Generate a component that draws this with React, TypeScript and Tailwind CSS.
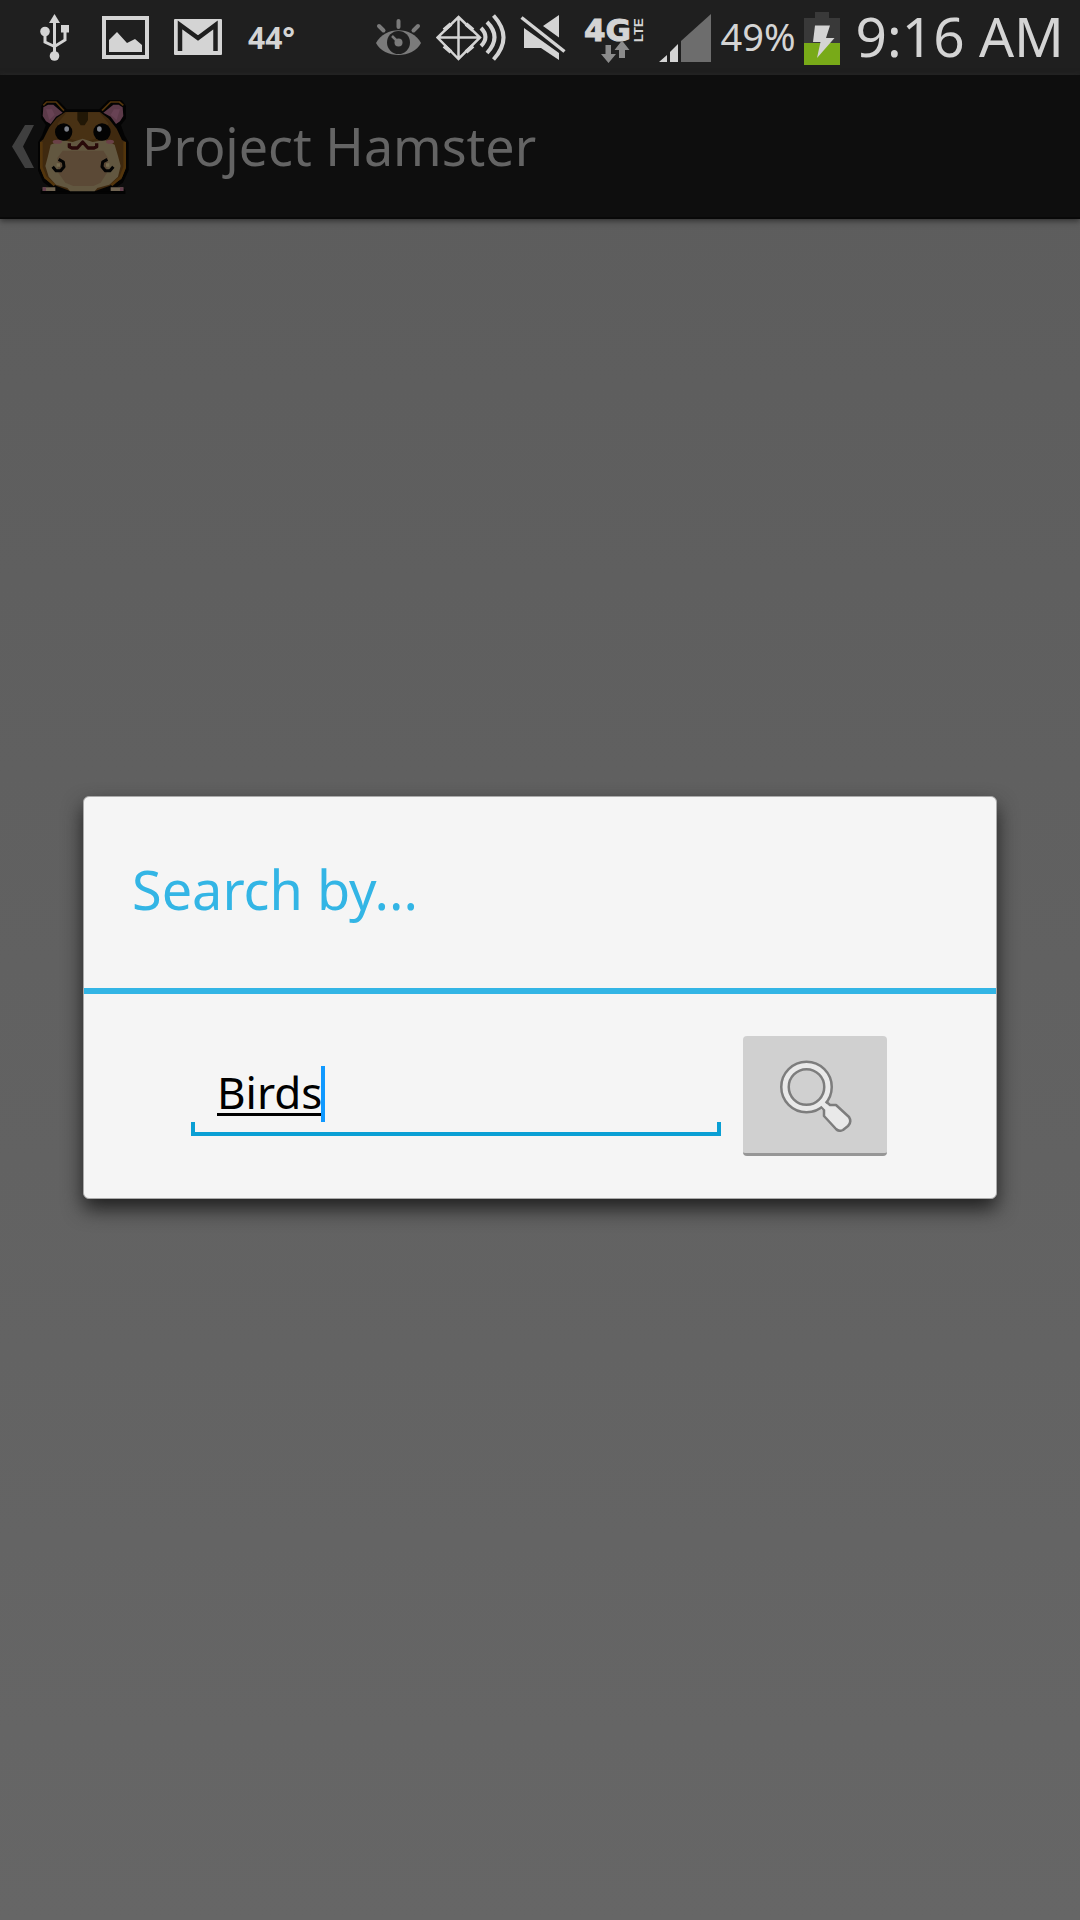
import { useState } from 'react';

function StatusBar() {
  return (
    <header className="flex h-[75px] items-center bg-[#1f1f1f] pl-10 pr-4 text-[#d4d4d4]">
      <div className="flex items-center gap-6">
        <UsbIcon />
        <PictureIcon />
        <MailIcon />
        <span className="text-[30px] font-bold leading-none">44°</span>
      </div>
      <div className="ml-auto flex items-center gap-2">
        <div className="flex items-center gap-3">
          <EyeIcon />
          <NfcIcon />
          <MuteIcon />
          <NetworkIcon />
          <SignalIcon />
        </div>
        <span className="pb-1 text-[38px] leading-none">49%</span>
        <BatteryIcon />
        <time className="ml-2 pb-1 text-[55px] leading-none">9:16 AM</time>
      </div>
    </header>
  );
}

function UsbIcon() {
  return (
    <svg className="h-12 w-[38px]" viewBox="40 14 38 48" fill="currentColor">
      <path d="M54.5 14 60 23H49z" />
      <path d="M54.5 22V56M45 31v11l9.500 4.500M65 31v9l-10.500 6.500" fill="none" stroke="currentColor" strokeWidth="3" />
      <circle cx="45" cy="31.500" r="4.800" />
      <rect x="61" y="25" width="8" height="7.500" />
      <circle cx="54.500" cy="56" r="4.800" />
    </svg>
  );
}

function PictureIcon() {
  return (
    <svg className="h-12 w-12" viewBox="102 14 48 48" fill="currentColor">
      <rect x="104" y="18" width="43" height="39" fill="none" stroke="currentColor" strokeWidth="4" />
      <path d="M109 52V40l8-8 10 11 8-4 7 6v7z" />
    </svg>
  );
}

function MailIcon() {
  return (
    <svg className="h-12 w-[50px]" viewBox="174 14 50 48">
      <rect x="174" y="19" width="48" height="36" rx="1" fill="currentColor" />
      <path d="M180 51V25l18 13 17.500-13v26" fill="none" stroke="#1f1f1f" strokeWidth="4.500" />
    </svg>
  );
}

function EyeIcon() {
  return (
    <svg className="h-12 w-12" viewBox="376 14 48 48" fill="none" stroke="#7b7b7b">
      <path d="M376 43c9-17 36-17 45 0-8 16-37 16-45 0z" fill="#7b7b7b" stroke="none" />
      <circle cx="398.500" cy="42.500" r="11.500" fill="#1f1f1f" stroke="none" />
      <circle cx="398.500" cy="42.500" r="4" fill="#7b7b7b" stroke="none" />
      <path d="m398 42-6-6" strokeWidth="2.500" />
      <path d="M398.500 21v6M379 26l4.500 4.500M418 26l-4.500 4.500" strokeWidth="4" strokeLinecap="round" />
    </svg>
  );
}

function NfcIcon() {
  return (
    <svg className="h-12 w-[72px]" viewBox="436 14 72 48" fill="none" stroke="currentColor">
      <path d="M458.500 17 480 37.500 458.500 59 437.500 37.500zM458.500 17v42M438 37.500h42" strokeWidth="2.500" />
      <path d="m451 24-7 6M466 24l7 6M451 52l-7-6M466 52l7-6" strokeWidth="4" />
      <path d="M481 28q9 9 0 18M487 22q15 15 0 31M493.500 15.500q20 22 0 44" strokeWidth="4" />
    </svg>
  );
}

function MuteIcon() {
  return (
    <svg className="h-12 w-[52px]" viewBox="520 14 52 48" fill="currentColor">
      <path d="M559 15v22.500L543 26zM524 28l35 25v7l-18-12h-17z" />
      <path d="m521.500 17.500 43 34" stroke="currentColor" strokeWidth="3.500" />
    </svg>
  );
}

function NetworkIcon() {
  return (
    <svg className="h-[68px] w-[62px] overflow-visible" viewBox="584 4 62 68" fill="currentColor">
      <text x="584" y="41" fontFamily="'DejaVu Sans'" fontSize="31" fontWeight="700" stroke="currentColor" strokeWidth="1">4G</text>
      <text transform="translate(643 42) rotate(-90)" fontFamily="'Liberation Sans'" fontSize="13" fontWeight="700">LTE</text>
      <path d="M605.500 45h5.500v9h5L608.500 63 601 54h4.500zM619 58h6v-8h4.500L622 40.500 614.500 50h4.500z" fill="#8b8b8b" />
    </svg>
  );
}

function SignalIcon() {
  return (
    <svg className="h-12 w-[54px]" viewBox="658 15 54 48">
      <path d="M659 63l8-7v7zM670 63V53l8-8v18z" fill="currentColor" />
      <path d="M681 63V42l30-27v48z" fill="#6d6d6d" />
    </svg>
  );
}

function BatteryIcon() {
  return (
    <svg className="h-[54px] w-9" viewBox="803 10 36 54">
      <path d="M814 11h14v6h11v25h-36V17h11z" fill="#393939" />
      <path d="M803 42h36v22h-36z" fill="#78aa18" />
      <path d="M814 24.500h15l-4 12.500h8.500L816 57l3.500-16H812z" fill="currentColor" />
    </svg>
  );
}

function HamsterIcon() {
  return (
    <svg className="h-24 w-24" viewBox="110 56 288 288" strokeLinejoin="round">
      <path
        d="M140 68h34l26 28h102l28-28h34l10 14v34l-16 20 12 34 12 20v82l-16 34-26 18 32 10v8h-80l-10 8h-66l-10-8h-76v-8l32-10-26-20-14-32v-82l12-20 12-34-14-20V82z"
        fill="#030303"
        stroke="#030303"
        strokeWidth="12"
      />
      <path d="M198 98h104l26 20 24 30 16 34 12 6v78l-14 34-36 20-40 14h-80l-38-14-36-22-14-32v-78l10-8 18-36 22-28z" fill="#3f290f" />
      <path d="M126 188v76l12 30 28 24M376 188v76l-12 30-28 24" fill="none" stroke="#53350c" strokeWidth="8" />
      <path d="M202 99h98l28 34-40 46-38 8-38-8-38-46z" fill="#483114" />
      <path d="M234 98h32v24l-10 16h-12l-10-16z" fill="#211706" />
      <path d="M132 78l10-10h28l24 26" fill="none" stroke="#53350c" strokeWidth="5" />
      <path d="M372 78l-12-10h-26l-26 26" fill="none" stroke="#53350c" strokeWidth="5" />
      <path d="M132 84l14-8h16l28 24-20 12-16 22-14-8-10-16z" fill="#5c3a49" />
      <path d="M370 84l-12-8h-16l-30 24 22 12 16 22 12-8 10-16z" fill="#5c3a49" />
      <path d="M140 90h18l8 16-16 16zM362 90h-18l-10 16 18 16z" fill="#684254" />
      <path
        d="M154 196l32-14 34 6 30-10 30 10 38-6 28 14 10 34 8 30-8 32-26 24-36 10-8 10h-74l-8-10-34-10-22-24-10-32 8-30z"
        fill="#625740"
      />
      <path d="M190 214h122l14 22-4 46-18 28-22 10h-60l-24-10-20-28-4-46z" fill="#5b4936" />
      <ellipse cx="193" cy="158" rx="26" ry="26" fill="#030303" />
      <ellipse cx="308" cy="158" rx="26" ry="26" fill="#030303" />
      <ellipse cx="202" cy="149" rx="7" ry="8" fill="#7c8089" />
      <ellipse cx="300" cy="149" rx="7" ry="8" fill="#7c8089" />
      <ellipse cx="174" cy="187" rx="14" ry="6" fill="#6a4147" />
      <ellipse cx="332" cy="187" rx="12" ry="6" fill="#6a4147" />
      <path d="M210 192v10l8 4h16l16-18 16 18h18l8-4v-10" fill="none" stroke="#280909" strokeWidth="10" />
      <path d="M178 240l14 8 2 14-10 12h-14l-10-12" fill="none" stroke="#030303" strokeWidth="9" />
      <path d="M324 240l-14 8-2 14 10 12h14l10-12" fill="none" stroke="#030303" strokeWidth="9" />
      <path d="M172 252h10v10h-10zM320 252h10v10h-10z" fill="#766c50" />
      <path d="M130 324h38v11h-38zM334 324h38v11h-38z" fill="#706452" />
      <path d="M130 324h10v11h-10zM362 324h10v11h-10z" fill="#65404f" />
    </svg>
  );
}

function ActionBar() {
  return (
    <nav className="flex h-36 items-center border-b-2 border-[#080808] bg-[#0e0e0e] px-3 shadow-[0_2px_6px_#303030]">
      <a href="#back" className="flex items-center text-[#646464]" aria-label="Navigate up">
        <svg className="h-11 w-6" viewBox="12 125 24 44">
          <path d="M25 126h9l-11 21.500L34 169h-9L12 147.500z" fill="#3f3f3f" />
        </svg>
        <HamsterIcon />
      </a>
      <h1 className="ml-2.5 text-[52px] leading-none text-[#646464]">Project Hamster</h1>
    </nav>
  );
}

function SearchIcon() {
  return (
    <svg className="h-[74px] w-[74px]" viewBox="777 1058 74 74" strokeLinejoin="round">
      <path d="m819 1104 4 6v6l12 13q3 3 7 1l5-4q4-4 1-9l-13-12h-6l-6-5z" fill="#e9e9e9" stroke="#7d7d7d" strokeWidth="2.500" />
      <circle cx="805.500" cy="1087" r="21.500" fill="none" stroke="#7d7d7d" strokeWidth="10" />
      <path d="m819 1101 7 7" stroke="#e9e9e9" strokeWidth="5" />
      <circle cx="805.500" cy="1087" r="21.500" fill="none" stroke="#e9e9e9" strokeWidth="5" />
    </svg>
  );
}

function SearchDialog() {
  const [query, setQuery] = useState('Birds');

  return (
    <section
      role="dialog"
      aria-labelledby="search-title"
      className="w-full overflow-hidden rounded-md border border-[#aaaaaa] bg-[#f5f5f5] shadow-[0_10px_20px_#202020]"
    >
      <h2
        id="search-title"
        className="flex h-[197px] items-center border-b-6 border-[#33b5e5] px-12 pb-2 text-[54px] leading-none text-[#33b5e5]"
      >
        Search by...
      </h2>
      <form className="flex items-center py-[42px] pl-[107px] pr-[109px]" onSubmit={(e) => e.preventDefault()}>
        <div className="relative mr-[22px] flex-1">
          <input
            type="text"
            aria-label="Search by"
            value={query}
            onChange={(e) => setQuery(e.target.value)}
            className="h-20 w-full px-[26px] pb-2 text-[44px] text-black underline decoration-[3px] underline-offset-4 caret-[#1099ff] outline-none"
          />
          {/* bracket under the field */}
          <span className="pointer-events-none absolute inset-x-0 bottom-0 h-[14px] border-4 border-t-0 border-[#0a9fd4]" />
          <span className="pointer-events-none absolute bottom-[14px] left-[130px] h-14 w-1 bg-[#1099ff]" />
        </div>
        <button
          type="submit"
          aria-label="Search"
          className="flex h-[120px] w-36 items-center justify-center rounded-sm border-b-3 border-[#969696] bg-[#d0d0d0]"
        >
          <SearchIcon />
        </button>
      </form>
    </section>
  );
}

export default function App() {
  return (
    <div className="relative flex min-h-screen flex-col bg-linear-to-b from-[#5c5c5c] to-[#666666] font-['Noto_Sans',sans-serif]">
      <StatusBar />
      <ActionBar />
      <div className="absolute inset-x-0 bottom-0 top-[75px] flex items-center px-[83px]">
        <SearchDialog />
      </div>
    </div>
  );
}
